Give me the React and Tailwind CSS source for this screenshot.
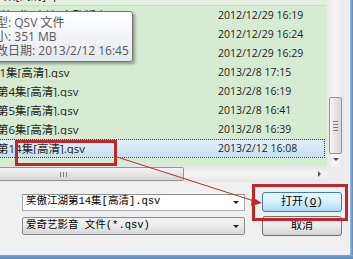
const listFont = { fontFamily: '"Open Sans", "Noto Sans CJK SC", sans-serif' };
const sysFont = { fontFamily: '"Liberation Mono", "Noto Sans CJK SC", monospace' };

const rows = [
  { name: "笑傲江湖第3集[高清].qsv", shift: "ml-[-60px]", date: "2013/2/12 16:45", partialTop: true },
  { name: "笑傲江湖第1集[高清]完整版本.qsv", shift: "ml-[-45px]", date: "2012/12/29 16:19" },
  { name: "笑傲江湖第2集[高清]完整版本.qsv", shift: "ml-[-45px]", date: "2012/12/29 16:24" },
  { name: "笑傲江湖第3集[高清].qsv", shift: "ml-[-51px]", date: "2012/12/29 16:29" },
  { name: "第1集[高清].qsv", shift: "ml-[-12px]", date: "2013/2/8 17:15" },
  { name: "第4集[高清].qsv", shift: "ml-[-3px]", date: "2013/2/8 16:19" },
  { name: "第5集[高清].qsv", shift: "ml-[-3px]", date: "2013/2/8 16:41" },
  { name: "第6集[高清].qsv", shift: "ml-[-3px]", date: "2013/2/8 16:39" },
  { name: "第14集[高清].qsv", shift: "ml-[-3px]", date: "2013/2/12 16:08", selected: true },
];

function Row({ name, shift, date, selected, partialTop }) {
  return (
    <div
      className={
        "flex h-[19px] shrink-0 items-center text-[#1c1c1c] " +
        (partialTop ? "mt-[-13px] border-b border-[#c9dcc6] bg-[#e2eee0] " : "") +
        (selected
          ? "w-[325px] border-y border-r border-dotted border-[#3a3a3a] bg-gradient-to-b from-[#e3f0fb] to-[#c6dff3]"
          : "")
      }
    >
      <div className="w-[212px] shrink-0 overflow-hidden whitespace-nowrap text-[11.5px] leading-none">
        <span className={"inline-block " + shift}>{name}</span>
      </div>
      <div className="flex h-full items-center whitespace-nowrap pl-[6px] text-[10.5px] leading-none">
        {date}
      </div>
    </div>
  );
}

function VScrollbar() {
  return (
    <div className="flex w-[17px] flex-col bg-[#eeeeee]">
      <div className="flex h-[166px] flex-col items-center bg-gradient-to-r from-[#e8e8e8] via-[#f6f6f6] to-[#e8e8e8]">
        <div className="mt-[97px] flex h-[57px] w-[13px] flex-col items-center justify-center gap-[2px] rounded-[2px] border border-[#959595] bg-gradient-to-r from-[#f5f5f5] to-[#d6d6d6]">
          <div className="h-px w-[5px] bg-[#7a7a7a]" />
          <div className="h-px w-[5px] bg-[#7a7a7a]" />
          <div className="h-px w-[5px] bg-[#7a7a7a]" />
          <div className="h-px w-[5px] bg-[#7a7a7a]" />
        </div>
        <div className="mt-[4px] h-0 w-0 border-x-[3px] border-t-[3px] border-x-transparent border-t-[#555]" />
      </div>
      <div className="h-[16px] bg-[#ececec]" />
    </div>
  );
}

function HScrollbar() {
  return (
    <div className="flex h-[16px] items-center bg-gradient-to-b from-[#e6e6e6] via-[#f4f4f4] to-[#e6e6e6]">
      <div className="flex h-[14px] w-[184px] items-center justify-start rounded-r-[2px] border border-l-0 border-[#959595] bg-gradient-to-b from-[#f5f5f5] to-[#d6d6d6] pl-[60px]">
        <div className="flex gap-[2px]">
          <div className="h-[5px] w-px bg-[#7a7a7a]" />
          <div className="h-[5px] w-px bg-[#7a7a7a]" />
          <div className="h-[5px] w-px bg-[#7a7a7a]" />
        </div>
      </div>
      <div className="ml-auto mr-[6px] h-0 w-0 border-y-[3px] border-l-[3px] border-y-transparent border-l-[#555]" />
    </div>
  );
}

export default function App() {
  return (
    <div className="relative h-[259px] w-[353px] overflow-hidden bg-[#f0f0f0]" style={listFont}>
      <div className="flex h-[255px]">
        <div className="flex w-[350px] flex-col">
          <div className="flex h-[182px] w-[344px]">
            <div className="flex w-[327px] flex-col">
              <div className="flex h-[166px] flex-col overflow-hidden bg-[#d5ebd2]">
                {rows.map((r, i) => (
                  <Row key={i} {...r} />
                ))}
              </div>
              <HScrollbar />
            </div>
            <VScrollbar />
          </div>

          <div className="flex flex-col gap-[4px] pl-[22px] pt-[10px]" style={sysFont}>
            <div className="flex h-[20px] items-center">
              <div className="flex h-[17px] w-[223px] items-center border border-[#abadb3] border-t-[#8e8f8f] bg-white pl-[3px] text-[10.5px] text-black">
                <span>笑傲江湖第14集[高清].qsv</span>
                <div className="ml-auto mr-[5px] h-0 w-0 border-x-[3px] border-t-[3px] border-x-transparent border-t-[#222]" />
              </div>
              <div className="ml-[17px] flex h-[20px] w-[80px] items-center justify-center rounded-[3px] border border-[#3c7fb1] bg-gradient-to-b from-[#eaf6fd] via-[#d9f0fc] to-[#a7d9f5] text-[11px] text-black">
                打开(<span className="underline">O</span>)
              </div>
            </div>
            <div className="flex h-[20px] items-center">
              <div className="flex h-[18px] w-[223px] items-center rounded-[2px] border border-[#8a8a8a] bg-gradient-to-b from-[#f2f2f2] via-[#ebebeb] to-[#d6d6d6] pl-[3px] text-[10.5px] text-black">
                <span>爱奇艺影音 文件(*.qsv)</span>
                <div className="ml-auto mr-[5px] h-0 w-0 border-x-[3px] border-t-[3px] border-x-transparent border-t-[#222]" />
              </div>
              <div className="ml-[17px] flex h-[20px] w-[80px] items-center justify-center rounded-[3px] border border-[#707070] bg-gradient-to-b from-[#f2f2f2] via-[#ebebeb] to-[#d4d4d4] text-[11px] text-black">
                取消
              </div>
            </div>
          </div>
        </div>
        <div className="w-[3px] bg-gradient-to-r from-[#9cbde0] to-[#5c88bd]" />
      </div>
      <div className="h-[4px] bg-gradient-to-b from-[#7ea4cf] to-[#5a86ba]" />

      {/* tooltip */}
      <div className="absolute left-[-6px] top-[11px] flex h-[51px] w-[139px] flex-col justify-center rounded-[3px] border border-[#767676] bg-gradient-to-b from-white to-[#e6e9ef] text-[12px] leading-[14px] text-[#575757] shadow-[2px_2px_3px_rgba(0,0,0,0.35)]">
        <div className="ml-[-11px] h-[14px] whitespace-nowrap">类型: QSV 文件</div>
        <div className="ml-[-11px] h-[14px] whitespace-nowrap">大小: 351 MB</div>
        <div className="ml-[-11px] h-[14px] whitespace-nowrap">修改日期: 2013/2/12 16:45</div>
      </div>

      {/* annotation boxes */}
      <div className="absolute left-[15px] top-[140px] h-[26px] w-[102px] border-[3px] border-[#c3252c]" />
      <div className="absolute left-[252px] top-[184px] h-[37px] w-[96px] border-[3px] border-[#c3252c]" />
      <svg className="absolute left-0 top-0" width="353" height="259">
        <line x1="117" y1="157" x2="254" y2="201" stroke="#c3252c" strokeWidth="1" />
        <polygon points="262,203 252,197 251,206" fill="#c3252c" />
      </svg>
    </div>
  );
}
